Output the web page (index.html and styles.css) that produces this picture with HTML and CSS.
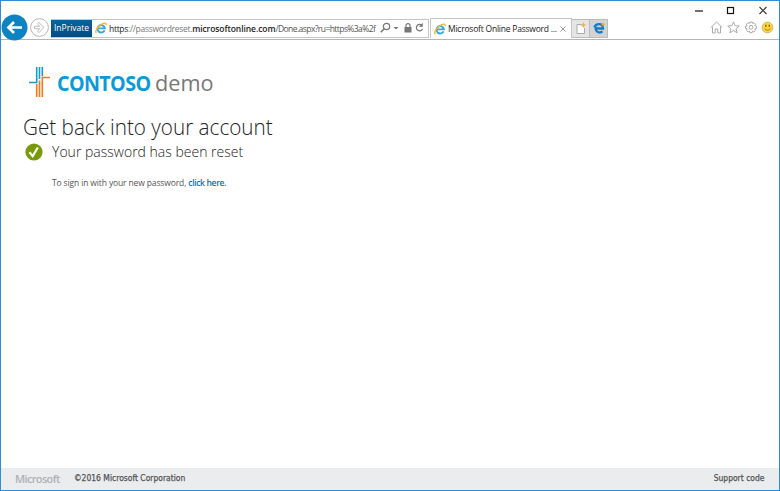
FILE: index.html
```html
<!DOCTYPE html>
<html lang="en">
<head>
<meta charset="utf-8">
<title>Microsoft Online Password Reset</title>
<link rel="stylesheet" href="styles.css">
</head>
<body>
<svg class="defs" width="0" height="0" aria-hidden="true">
  <symbol id="ie" viewBox="0 0 12 12">
    <path d="M9.600 8.300A3.700 3.700 0 1 1 9.900 6.400H3" fill="none" stroke="#35a7df" stroke-width="1.900"/>
    <path d="M1.400 11.200C-.5 9.700 2.200 5.400 5.400 3.100 8.500.8 11.900 0 11 3.200" fill="none" stroke="#efb52c" stroke-width="1.300"/>
  </symbol>
</svg>
<div class="window">
  <header class="chrome">
    <div class="controls">
      <svg width="76" height="10" viewBox="0 0 76 10" fill="none" stroke="#333">
        <path d="M0 6h8" stroke-width="1.400"/>
        <rect x="32.500" y="2.500" width="6" height="6" stroke="#111" stroke-width="1.200"/>
        <path d="M64.500 2l7 7M71.500 2l-7 7" stroke-width="1.100"/>
      </svg>
    </div>
    <div class="toolbar">
      <svg class="back" width="27" height="27" viewBox="0 0 27 27">
        <circle cx="13.500" cy="13.500" r="13" fill="#0d84c1"/>
        <path d="M21 13.500H8M13 8l-5.500 5.500L13 19" fill="none" stroke="#fff" stroke-width="2.700"/>
      </svg>
      <svg class="forward" width="19" height="19" viewBox="0 0 19 19" fill="none" stroke="#b5b5b5">
        <circle cx="9.500" cy="9.500" r="8.900"/>
        <path d="M4.500 8.300h5.200L7.400 5.800l1.500-1.300 5.100 5-5.100 5-1.500-1.300 2.300-2.500H4.500z" stroke-width=".9"/>
      </svg>
      <div class="address">
        <span class="inprivate">InPrivate</span>
        <svg class="favicon" width="12" height="12"><use href="#ie"/></svg>
        <span class="url"><span class="scheme">https</span>://passwordreset.<b>microsoftonline.com</b><span class="path">/Done.aspx?ru=https%3a%2f</span></span>
        <svg class="tools" width="48" height="12" viewBox="0 0 48 12" fill="none" stroke="#777">
          <circle cx="6.500" cy="4.500" r="3.200" stroke-width="1.200"/><path d="M4.300 6.700L.8 10.200" stroke-width="1.500"/>
          <path d="M13.500 5h5l-2.500 2.500z" fill="#777" stroke="none"/>
          <rect x="24.500" y="5" width="7" height="5.500" fill="#777" stroke="none"/><path d="M26 5.500V3.700a2 2 0 0 1 4 0v1.800" stroke-width="1.200"/>
          <path d="M41.500 3A3.200 3.200 0 1 0 42.500 7" stroke-width="1.200"/><path d="M42.800.8v4h-4z" fill="#777" stroke="none"/>
        </svg>
      </div>
      <div class="tab">
        <svg class="favicon" width="12" height="12"><use href="#ie"/></svg>
        <span class="tab-title">Microsoft Online Password ...</span>
        <svg class="close" width="6" height="6" viewBox="0 0 6 6" stroke="#999"><path d="M.5.500l5 5M5.500.500l-5 5"/></svg>
      </div>
      <div class="tab-button">
        <svg width="12" height="13" viewBox="0 0 12 13"><path d="M2 2.500h4.500M9.500 6v5.500H2v-9" fill="#fff" stroke="#aaa"/><path d="M8.500 0l.8 2.200 2.200.8-2.200.8-.8 2.200-.8-2.200L5.500 3l2.200-.8z" fill="#ecae3f"/></svg>
      </div>
      <div class="tab-button edge">
        <svg width="12" height="12" viewBox="0 0 12 12"><path d="M1.400 5.600C2.200 1.600 10.300.300 10 6.500H3.600M3.500 4.500C.8 8.900 6 12 9.500 9.400" fill="none" stroke="#1279d4" stroke-width="2.300"/><path d="M10 0l.7 1.800 1.300.7-1.300.7L10 5l-.7-1.800L8 2.500l1.300-.7z" fill="#e7a43b"/></svg>
      </div>
      <svg class="commands" width="64" height="13" viewBox="0 0 64 13" fill="none" stroke="#aaa">
        <path d="M.8 6.500L6.500 1l5.700 5.500M2.500 5.500V12h2.700V8h2.600v4h2.700V5.500"/>
        <path d="M23.500.900l1.600 3.800 4.200.3-3.200 2.700 1 4.100-3.600-2.200-3.600 2.200 1-4.100L17.700 5l4.200-.3z"/>
        <path d="M39.800 1h2.400l.4 1.500 1.300-.8 1.600 1.600-.8 1.400 1.700.4v2.400l-1.700.4.8 1.400-1.600 1.600-1.400-.8-.4 1.600h-2.300l-.4-1.600-1.400.8-1.600-1.600.8-1.400-1.600-.4V5.100l1.600-.4-.8-1.400L38 1.700l1.400.8z"/><circle cx="41" cy="6.300" r="1.900"/>
        <circle cx="57.500" cy="6.500" r="5.400" fill="#fbd437" stroke="#bca66a" stroke-width=".7"/><path d="M54.500 7.500q3 3.500 6 0" stroke="#9d7a1c" stroke-width=".9"/><path d="M55.800 3.800v2M59.200 3.800v2" stroke="#5a4810" stroke-width="1.100"/>
      </svg>
    </div>
  </header>
  <main class="page">
    <div class="brand">
      <svg width="22" height="30" viewBox="0 0 22 30" fill="none" stroke-width="1.600">
        <path d="M7.700 0v15.500H0M10.500 0v12M13.300 0v9.300" stroke="#159ad5"/>
        <path d="M21 10.500h-7.700V30M10.500 13.500V30M7.700 17v13" stroke="#f4771c"/>
      </svg>
      <span class="brand-name">CONTOSO</span><span class="brand-suffix">demo</span>
    </div>
    <h1>Get back into your account</h1>
    <div class="status">
      <svg width="18" height="18" viewBox="0 0 18 18"><circle cx="9" cy="9" r="8.600" fill="#789a08"/><path d="M4.500 9.200l3.200 3.900L12.800 4.500" fill="none" stroke="#fff" stroke-width="2.200"/></svg>
      <h2>Your password has been reset</h2>
    </div>
    <p class="hint">To sign in with your new password, <a>click here.</a></p>
  </main>
  <footer class="footer">
    <span class="ms">Microsoft</span>
    <span class="copyright">©2016 Microsoft Corporation</span>
    <span class="support">Support code</span>
  </footer>
</div>
</body>
</html>
```
FILE: styles.css
```css
* { box-sizing: border-box; }
body { margin: 0; font-family: "Open Sans", "Noto Sans", sans-serif; background: #fff; }
svg { display: block; flex: none; }
.defs { position: absolute; }
.window { width: 780px; height: 491px; border: 1px solid #2f8cd7; display: flex; flex-direction: column; overflow: hidden; white-space: nowrap; }
.chrome { height: 39px; flex: none; border-bottom: 1px solid #b5b5b5; }
.controls { height: 13px; padding: 4px 8px 0 0; display: flex; justify-content: flex-end; }
.toolbar { height: 27px; display: flex; align-items: center; }
.forward { margin-left: 2px; }
.address { width: 378px; height: 19px; margin: 1px 0 0 2px; border: 1px solid #c5c5c5; border-left: 0; display: flex; align-items: center; font-size: 9px; }
.inprivate { width: 41px; height: 17px; line-height: 16px; background: linear-gradient(#07649d, #064a7d); color: #fff; text-align: center; font-size: 8.5px; font-weight: 500; }
.favicon { margin-left: 3px; }
.url { width: 269px; margin-left: 2px; color: #777; font-size: 8.5px; letter-spacing: -0.3px; }
.url b { color: #222; font-weight: 600; letter-spacing: -0.08px; }
.scheme { color: #222; }
.path { color: #555; letter-spacing: -0.57px; }
.tools { margin-left: 2px; }
.tab { width: 142px; height: 20px; margin: 1px 0 0 1px; border: 1px solid #c5c5c5; border-bottom: 0; display: flex; align-items: center; font-size: 8.5px; color: #222; }
.tab-title { width: 110px; margin-left: 2px; letter-spacing: -0.22px; }
.close { margin-left: 2px; }
.tab-button { width: 18px; height: 19px; margin-top: 1px; background: #e5e5e5; border: 1px solid #bbb; border-left: 0; display: grid; place-items: center; }
.tab-button.edge { background: #d3d3d3; }
.commands { margin-left: auto; margin-right: 5px; }
.page { flex: 1; padding: 26px 0 0 22px; }
.brand { height: 31px; padding-left: 6px; display: flex; align-items: center; }
.brand-name { width: 98px; margin-left: 6px; font-size: 22px; line-height: 30px; font-weight: 700; color: #0c9ad6; letter-spacing: -0.7px; transform: scaleX(.895); transform-origin: left; }
.brand-suffix { font-size: 22px; line-height: 30px; color: #777; transform: scaleX(.985); transform-origin: left; }
h1, h2, p { margin: 0; font-weight: 300; }
h1 { margin-top: 14px; height: 30px; line-height: 30px; font-size: 22px; color: #222; transform: scaleX(.94); transform-origin: left; }
.status { height: 19px; margin-top: 1px; padding-left: 2px; display: flex; align-items: center; }
h2 { margin-left: 9px; font-size: 15px; line-height: 19px; color: #222; transform: scaleX(.934); transform-origin: left; }
.hint { margin: 15px 0 0 29px; font-size: 8.5px; line-height: 14px; font-weight: 400; color: #555; letter-spacing: -0.13px; }
.hint a { color: #0072c6; font-weight: 600; letter-spacing: -0.34px; }
.footer { height: 22px; padding: 0 15px 1px 14px; background: #ebecee; display: flex; align-items: center; font: 400 8px "DejaVu Sans", sans-serif; color: #555; -webkit-text-stroke: .25px #555; }
.ms { width: 59px; font: 600 11px "Open Sans", sans-serif; color: #b0b1b3; letter-spacing: -0.65px; -webkit-text-stroke: 0; }
.copyright { transform: scaleX(.95); transform-origin: left; }
.support { margin-left: auto; transform: scaleX(.95); transform-origin: right; }
```
